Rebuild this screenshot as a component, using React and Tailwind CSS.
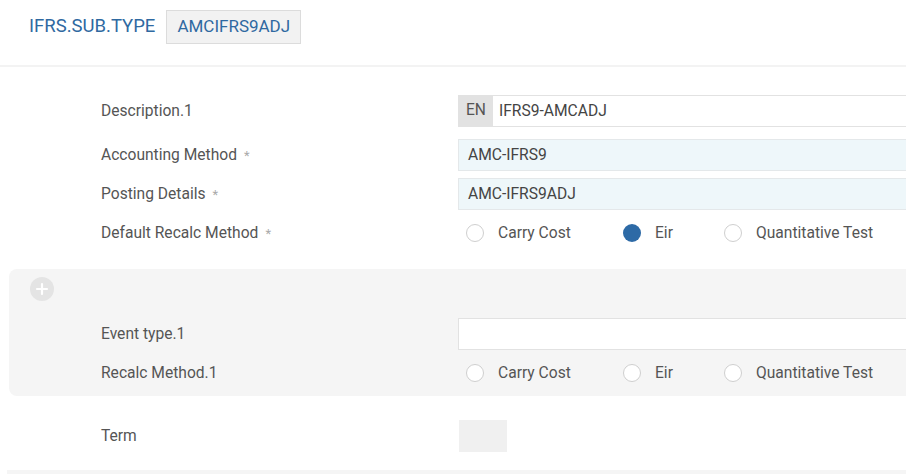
import React from "react";

const font = { fontFamily: "Roboto, 'Liberation Sans', sans-serif" };

function Radio({ label, checked }) {
  return (
    <label className="flex items-center gap-[14px]">
      <span
        className={`h-[18px] w-[18px] shrink-0 rounded-full ${
          checked ? "bg-[#2d6aa6]" : "border border-[#cfcfcf] bg-white"
        }`}
      />
      <span className="pt-[2px] text-[15.6px] text-[#555]">{label}</span>
    </label>
  );
}

function RadioGroup({ value }) {
  const opts = ["Carry Cost", "Eir", "Quantitative Test"];
  const widths = ["w-[157px]", "w-[101px]", ""];
  return (
    <div className="flex items-center pl-[8px]">
      {opts.map((o, i) => (
        <div key={o} className={widths[i]}>
          <Radio label={o} checked={o === value} />
        </div>
      ))}
    </div>
  );
}

function Label({ children, required }) {
  return (
    <div className="flex w-[357px] shrink-0 items-center pt-[2px] text-[15.6px] text-[#555]">
      {children}
      {required && <span className="ml-[7px] text-[13px] text-[#aaa]">*</span>}
    </div>
  );
}

export default function App() {
  return (
    <div className="h-[474px] w-[906px] overflow-hidden bg-white" style={font}>
      <header className="flex h-[65px] items-start gap-[11px] pl-[29px] pt-[10px]">
        <span className="flex h-[34px] items-center text-[18.5px] text-[#2f69a1]">IFRS.SUB.TYPE</span>
        <span className="flex h-[34px] items-center border border-[#dcdcdc] bg-[#f2f2f2] px-[10px] text-[17px] text-[#2f69a1]">
          AMCIFRS9ADJ
        </span>
      </header>
      <div className="h-[2px] bg-[#f3f3f3]" />

      <div className="pl-[101px] pt-[28px]">
        <div className="flex h-[32px] items-center">
          <Label>Description.1</Label>
          <div className="flex h-[32px] w-[480px] shrink-0 border border-[#e2e2e2] bg-white">
            <span className="flex w-[34px] items-center justify-center bg-[#e2e2e2] text-[15.6px] text-[#555]">EN</span>
            <span className="flex items-center pl-[6px] pt-[1px] text-[15.6px] text-[#444]">IFRS9-AMCADJ</span>
          </div>
        </div>
        <div className="mt-[12px] flex h-[32px] items-center">
          <Label required>Accounting Method</Label>
          <div className="flex h-[32px] w-[480px] shrink-0 items-center border border-[#e4e8ea] bg-[#eef7fa] pl-[9px] pt-[1px] text-[15.6px] text-[#444]">
            AMC-IFRS9
          </div>
        </div>
        <div className="mt-[7px] flex h-[32px] items-center">
          <Label required>Posting Details</Label>
          <div className="flex h-[32px] w-[480px] shrink-0 items-center border border-[#e4e8ea] bg-[#eef7fa] pl-[9px] pt-[1px] text-[15.6px] text-[#444]">
            AMC-IFRS9ADJ
          </div>
        </div>
        <div className="mt-[8px] flex h-[30px] items-center">
          <Label required>Default Recalc Method</Label>
          <RadioGroup value="Eir" />
        </div>
      </div>

      <section className="ml-[9px] mt-[21px] h-[127px] w-[920px] rounded-[8px] bg-[#f5f5f5] pt-[8px]">
        <div className="ml-[21px] flex h-[24px] w-[24px] items-center justify-center rounded-full bg-[#e4e4e4]">
          <svg width="14" height="14" viewBox="0 0 14 14">
            <path d="M7 2v10M2 7h10" stroke="#fff" strokeWidth="2.2" strokeLinecap="round" />
          </svg>
        </div>
        <div className="pl-[92px] pt-[17px]">
          <div className="flex h-[32px] items-center">
            <Label>Event type.1</Label>
            <div className="h-[32px] w-[480px] shrink-0 border border-[#e2e2e2] bg-white" />
          </div>
          <div className="mt-[8px] flex h-[30px] items-center">
            <Label>Recalc Method.1</Label>
            <RadioGroup value="" />
          </div>
        </div>
      </section>

      <div className="mt-[24px] flex h-[32px] items-center pl-[101px]">
        <Label>Term</Label>
        <div className="ml-[1px] h-[32px] w-[48px] bg-[#f0f0f0]" />
      </div>
      <div className="ml-[7px] mt-[18px] h-[4px] bg-[#f5f5f5]" />
    </div>
  );
}
